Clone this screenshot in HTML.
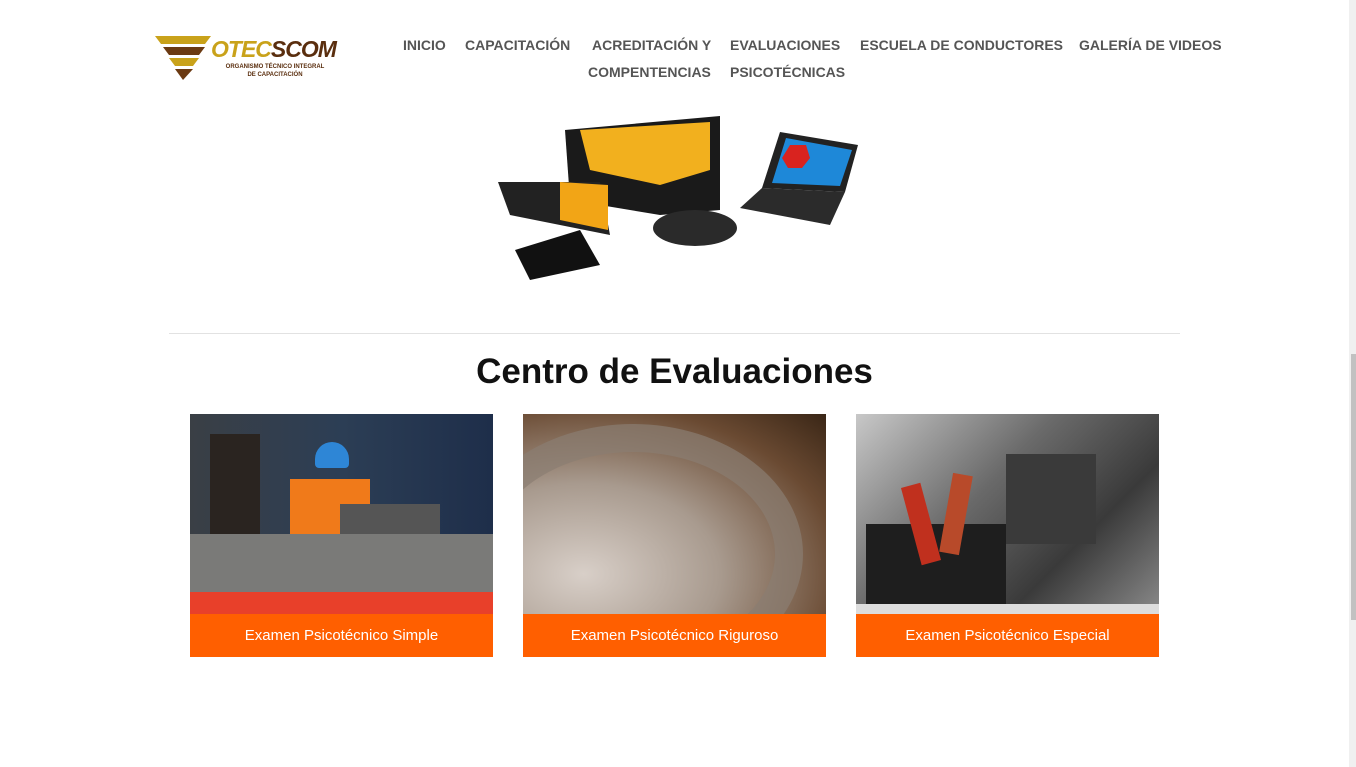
<!DOCTYPE html>
<html><head><meta charset="utf-8"><style>
*{margin:0;padding:0;box-sizing:border-box}
body{width:1356px;height:767px;background:#fff;position:relative;overflow:hidden;font-family:"Liberation Sans",sans-serif}
.nav{position:absolute;font-size:14px;font-weight:bold;color:#555;white-space:nowrap;letter-spacing:0}
.sb{position:absolute;left:1349px;top:0;width:7px;height:767px;background:#f0f0f0}
.th{position:absolute;left:1351px;top:354px;width:5px;height:266px;background:#c1c1c1}
.card{position:absolute;top:414px;width:303px;height:243px}
.card .img{height:200px;position:relative;overflow:hidden}
.card .bar{height:43px;background:#ff5f00;color:#fff;font-size:15px;text-align:center;line-height:43px}
h2{position:absolute;left:0;width:1349px;top:352px;text-align:center;font-size:35px;font-weight:bold;color:#111}
</style></head><body>
<div style="position:absolute;left:155px;top:34px;width:185px;height:48px">
<svg width="60" height="48" style="position:absolute;left:0;top:0"><polygon points="0,2 56,2 50,10 6,10" fill="#c9a21a"/><polygon points="8,13 50,13 44,21 14,21" fill="#6b3a12"/><polygon points="14,24 44,24 38,32 20,32" fill="#c9a21a"/><polygon points="20,35 38,35 28,46" fill="#6b3a12"/></svg>
<div style="position:absolute;left:56px;top:2px;font-size:23px;font-weight:bold;font-style:italic;letter-spacing:-1px;color:#c9a21a">OTEC<span style="color:#5a2e0e">SCOM</span></div>
<div style="position:absolute;left:60px;top:29px;font-size:6px;font-weight:bold;color:#5a2e0e;text-align:center;width:120px;line-height:8px">ORGANISMO TÉCNICO INTEGRAL<br>DE CAPACITACIÓN</div>
</div>
<div class="nav" style="left:403px;top:37px">INICIO</div>
<div class="nav" style="left:465px;top:37px">CAPACITACIÓN</div>
<div class="nav" style="left:592px;top:37px">ACREDITACIÓN Y</div>
<div class="nav" style="left:588px;top:64px">COMPENTENCIAS</div>
<div class="nav" style="left:730px;top:37px">EVALUACIONES</div>
<div class="nav" style="left:730px;top:64px">PSICOTÉCNICAS</div>
<div class="nav" style="left:860px;top:37px">ESCUELA DE CONDUCTORES</div>
<div class="nav" style="left:1079px;top:37px">GALERÍA DE VIDEOS</div>

<svg style="position:absolute;left:490px;top:110px" width="380" height="180">
<polygon points="75,20 230,6 230,100 170,105 80,90" fill="#1a1a1a"/>
<polygon points="90,20 220,12 220,60 170,75 100,60" fill="#f2b01e"/>
<polygon points="8,72 110,72 120,125 20,105" fill="#222"/>
<polygon points="70,72 118,75 118,120 70,110" fill="#f2a516"/>
<polygon points="25,140 90,120 110,155 40,170" fill="#111"/>
<ellipse cx="205" cy="118" rx="42" ry="18" fill="#2a2a2a"/>
<polygon points="290,22 368,35 355,82 272,78" fill="#222"/>
<polygon points="296,28 362,40 350,76 282,73" fill="#1e88d8"/>
<polygon points="272,78 355,82 340,115 250,98" fill="#2b2b2b"/>
<polygon points="300,35 316,35 320,48 312,58 298,58 292,48" fill="#d9231f"/>
</svg>

<div style="position:absolute;left:169px;top:333px;width:1011px;height:1px;background:#e2e2e2"></div>
<h2>Centro de Evaluaciones</h2>

<div class="card" style="left:190px"><div class="img" style="background:linear-gradient(90deg,#3a3f45,#2c3e55 50%,#1e2e4a)">
<div style="position:absolute;left:20px;top:20px;width:50px;height:130px;background:#2a2420"></div>
<div style="position:absolute;left:100px;top:65px;width:80px;height:110px;background:#f07a1a"></div>
<div style="position:absolute;left:125px;top:28px;width:34px;height:26px;border-radius:17px 17px 4px 4px;background:#2e86d6"></div>
<div style="position:absolute;left:150px;top:90px;width:100px;height:40px;background:#555"></div>
<div style="position:absolute;left:0;top:120px;width:303px;height:60px;background:#7a7a78"></div>
<div style="position:absolute;left:0;top:178px;width:303px;height:22px;background:#e8402a"></div>
</div><div class="bar">Examen Psicotécnico Simple</div></div>

<div class="card" style="left:523px"><div class="img" style="background:radial-gradient(ellipse at 20% 80%,#d8cfc8,#a89a8e 40%,#6a4a32 75%,#3a2616)">
<div style="position:absolute;left:-60px;top:10px;width:340px;height:260px;border-radius:50%;border:28px solid #8a7d72;opacity:.7"></div>
</div><div class="bar">Examen Psicotécnico Riguroso</div></div>

<div class="card" style="left:856px"><div class="img" style="background:linear-gradient(135deg,#c8c8c8,#6a6a6a 40%,#3a3a3a 70%,#8a8a8a)">
<div style="position:absolute;left:10px;top:110px;width:140px;height:80px;background:#1e1e1e"></div>
<div style="position:absolute;left:150px;top:40px;width:90px;height:90px;background:#3a3a3a"></div>
<div style="position:absolute;left:55px;top:70px;width:20px;height:80px;background:#c0301e;transform:rotate(-15deg)"></div>
<div style="position:absolute;left:90px;top:60px;width:20px;height:80px;background:#b84a2a;transform:rotate(10deg)"></div>
<div style="position:absolute;left:0;top:190px;width:303px;height:10px;background:#ddd"></div>
</div><div class="bar">Examen Psicotécnico Especial</div></div>

<div class="sb"></div><div class="th"></div>
</body></html>
